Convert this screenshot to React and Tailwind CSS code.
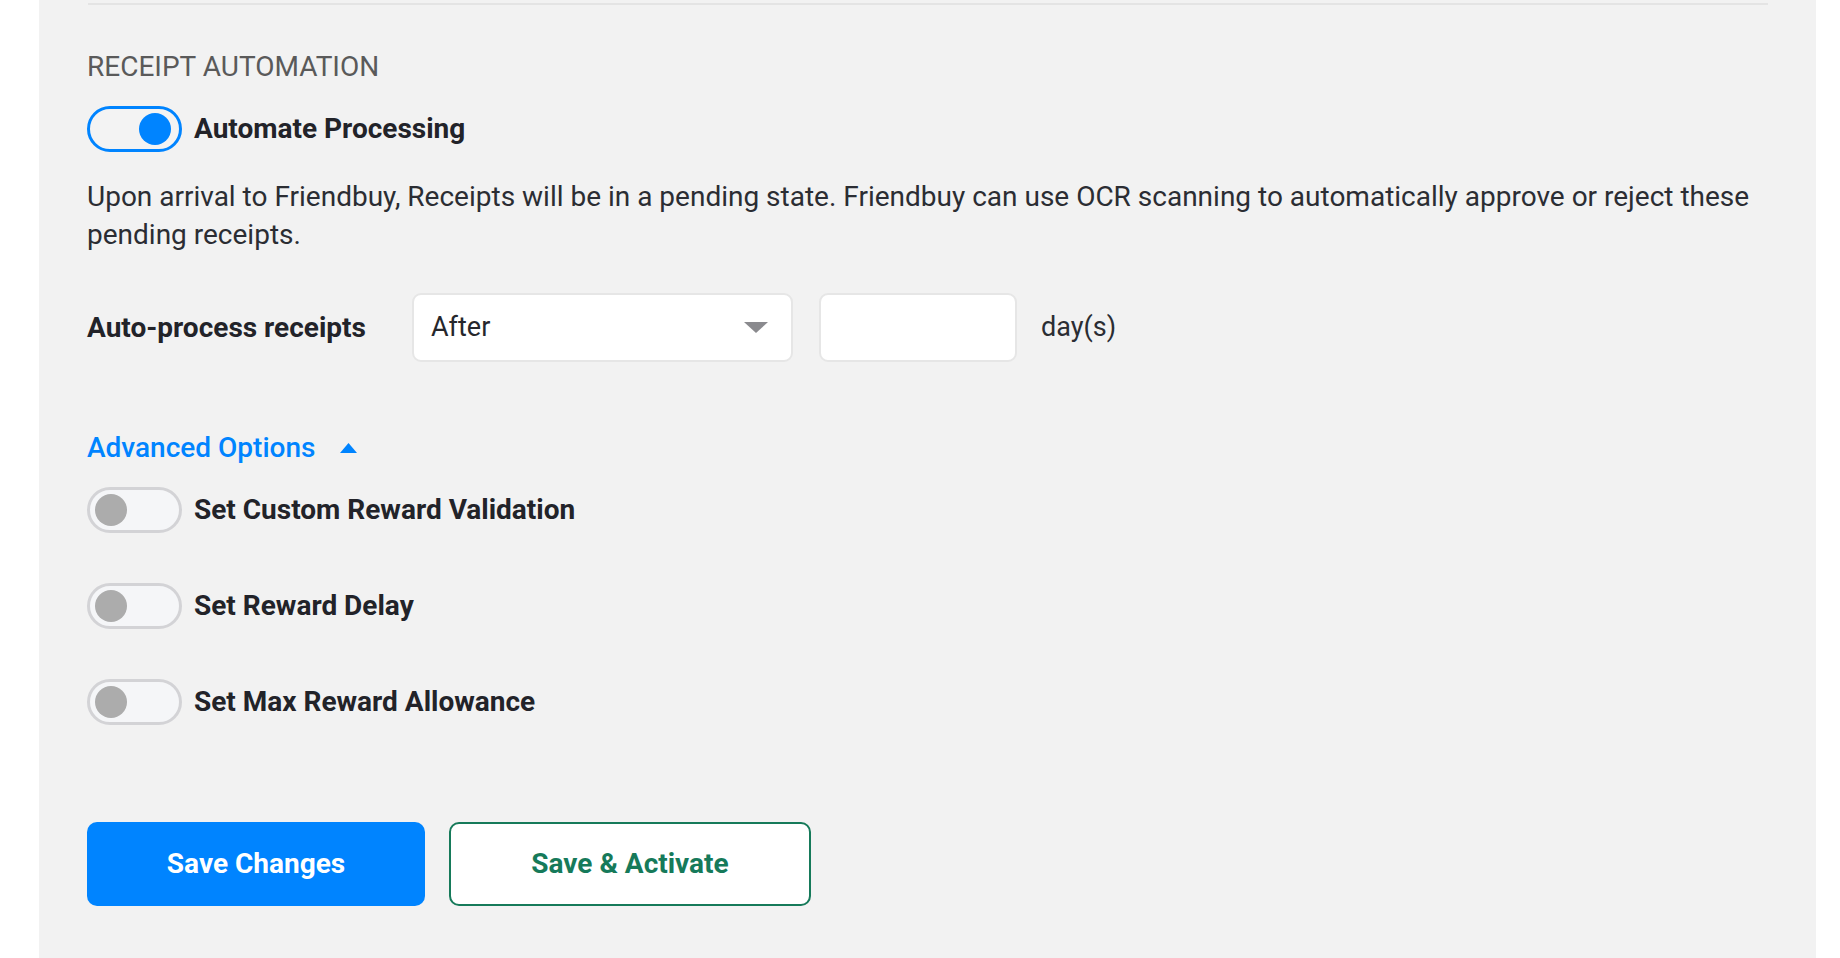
import { useState } from 'react';

function Toggle({ on, onChange }) {
  return (
    <button
      type="button"
      onClick={onChange}
      className={`flex items-center w-[95px] h-[46px] shrink-0 rounded-full border-[3px] ${
        on ? 'border-[#0084ff] bg-[#f3f3f3] justify-end pr-[8px]' : 'border-[#d3d3d6] bg-[#f5f6f8] justify-start pl-[5px]'
      }`}
    >
      <span className={`block w-[32px] h-[32px] rounded-full ${on ? 'bg-[#0084ff]' : 'bg-[#acacac]'}`} />
    </button>
  );
}

const ADVANCED = ['Set Custom Reward Validation', 'Set Reward Delay', 'Set Max Reward Allowance'];

export default function App() {
  const [auto, setAuto] = useState(true);
  const [adv, setAdv] = useState([false, false, false]);
  const [open, setOpen] = useState(true);
  const [days, setDays] = useState('');

  return (
    <div className="w-full h-[958px] bg-white flex overflow-hidden" style={{ fontFamily: 'Roboto, "Liberation Sans", sans-serif' }}>
      <div className="ml-[39px] w-[1777px] h-full bg-[#f2f2f2] pl-[48px] pr-[48px] pt-[3px]">
        <div className="h-[2px] bg-[#e4e4e4] ml-[1px]" />

        <h2 className="mt-[46px] text-[28px] leading-[32px] text-[#5a5a5a] font-normal">RECEIPT AUTOMATION</h2>

        <div className="mt-[23px] flex items-center gap-[12px]">
          <Toggle on={auto} onChange={() => setAuto(!auto)} />
          <span className="text-[28px] leading-[32px] font-bold text-[#222329]">Automate Processing</span>
        </div>

        <p className="mt-[26px] text-[28px] leading-[38px] text-[#2b2d33]">
          Upon arrival to Friendbuy, Receipts will be in a pending state. Friendbuy can use OCR scanning to automatically approve or reject these pending receipts.
        </p>

        <div className="mt-[39px] flex items-center">
          <span className="w-[325px] text-[28px] font-bold text-[#222329]">Auto-process receipts</span>
          <div className="w-[381px] h-[69px] bg-white border-2 border-[#e6e6e6] rounded-[9px] flex items-center justify-between pl-[17px] pr-[23px]">
            <span className="text-[27px] text-[#26272c]">After</span>
            <svg width="24" height="11" viewBox="0 0 24 11"><path d="M0 0h24L12 11z" fill="#8a8a8e" /></svg>
          </div>
          <input
            value={days}
            onChange={(e) => setDays(e.target.value)}
            className="ml-[26px] w-[198px] h-[69px] bg-white border-2 border-[#e6e6e6] rounded-[9px] px-[17px] text-[27px] outline-none"
          />
          <span className="ml-[24px] text-[27px] text-[#2b2d33]">day(s)</span>
        </div>

        <button type="button" onClick={() => setOpen(!open)} className="mt-[70px] flex items-center gap-[25px] text-[28px] leading-[32px] font-medium text-[#0084ff]">
          Advanced Options
          <svg width="17" height="10" viewBox="0 0 17 10" className={open ? '' : 'rotate-180'}><path d="M8.5 0L17 10H0z" fill="#0084ff" /></svg>
        </button>

        {open && (
          <div className="mt-[23px] flex flex-col gap-[50px]">
            {ADVANCED.map((label, i) => (
              <div key={label} className="flex items-center gap-[12px]">
                <Toggle on={adv[i]} onChange={() => setAdv(adv.map((v, j) => (j === i ? !v : v)))} />
                <span className="text-[28px] leading-[32px] font-bold text-[#222329]">{label}</span>
              </div>
            ))}
          </div>
        )}

        <div className="mt-[97px] flex gap-[24px]">
          <button type="button" className="w-[338px] h-[84px] rounded-[10px] bg-[#0084ff] text-white text-[28px] font-bold">Save Changes</button>
          <button type="button" className="w-[362px] h-[84px] rounded-[10px] bg-white border-2 border-[#167a5a] text-[#167a5a] text-[28px] font-bold">Save &amp; Activate</button>
        </div>
      </div>
    </div>
  );
}
